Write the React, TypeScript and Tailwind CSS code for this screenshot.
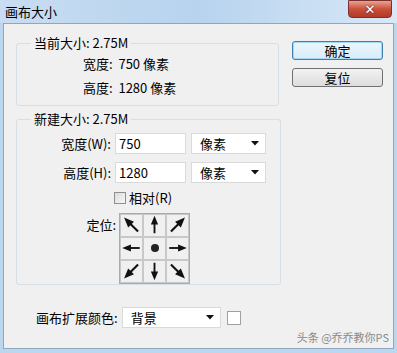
import React from "react";

const font = { fontFamily: '"Noto Sans CJK SC", "Microsoft YaHei", sans-serif' };

function Arrow({ angle }: { angle: number }) {
  const diag = angle % 90 !== 0;
  const s = diag ? 1.3 : 1.15;
  return (
    <svg width="22" height="22" viewBox="-11 -11 22 22">
      <g transform={`rotate(${angle}) scale(${s})`}>
        <line x1="0" y1="7.5" x2="0" y2="-2" stroke="#111" strokeWidth="1.7" />
        <polygon points="0,-8.5 -3.3,-0.5 3.3,-0.5" fill="#111" />
      </g>
    </svg>
  );
}

function Caret() {
  return (
    <svg width="8" height="5" viewBox="0 0 8 5">
      <polygon points="0,0 8,0 4,4.5" fill="#111" />
    </svg>
  );
}

function Select({ label, w }: { label: string; w: string }) {
  return (
    <div className={`flex items-center justify-between h-[21px] ${w} bg-white border border-[#dadada] pl-[8px] pr-[6px] text-[13px] text-black`}>
      <span>{label}</span>
      <Caret />
    </div>
  );
}

export default function App() {
  const cells: (number | null)[] = [-45, 0, 45, -90, null, 90, -135, 180, 135];
  return (
    <div style={font} className="w-[397px] h-[353px] bg-[#bcd6ee] flex flex-col overflow-hidden">
      <div className="h-[23px] shrink-0 flex items-start justify-between bg-gradient-to-r from-[#c8ddf2] via-[#b7d3ee] to-[#d8e8f7]">
        <div className="pl-[5px] pt-[2px] text-[13px] text-black">画布大小</div>
        <div className="mr-[5px] w-[44px] h-[18px] rounded-b-[4px] border border-[#7a3030] bg-gradient-to-b from-[#e7a38e] via-[#c9503a] to-[#b23a26] flex items-center justify-center">
          <span className="text-white font-bold text-[13px] leading-none" style={{ fontFamily: '"DejaVu Sans", sans-serif', textShadow: "0 0 2px #522" }}>✕</span>
        </div>
      </div>
      <div className="flex-1 mx-[3px] mb-[4px] bg-[#f0f0f0] border border-[#8ea6c0] relative text-[13px] text-black">
        <div className="flex pt-[12px] pl-[12px]">
          <div className="w-[263px] flex flex-col">
            <fieldset className="border border-[#d5dfe5] rounded-[3px] h-[70px] px-[14px]">
              <legend className="px-[3px] leading-[14px]">当前大小: 2.75M</legend>
              <div className="pl-[52px] pt-[6px] leading-[16px]">宽度:&nbsp; 750 像素</div>
              <div className="pl-[52px] pt-[8px] leading-[16px]">高度:&nbsp; 1280 像素</div>
            </fieldset>
            <fieldset className="mt-[6px] border border-[#d5dfe5] rounded-[3px] h-[173px] px-[14px]">
              <legend className="px-[3px] leading-[14px]">新建大小: 2.75M</legend>
              <div className="flex items-center mt-[7px]">
                <div className="w-[84px] text-right pr-[4px]">宽度(W):</div>
                <div className="w-[71px] h-[21px] bg-white border border-[#dadada] pl-[3px] leading-[19px]">750</div>
                <div className="ml-[5px]"><Select label="像素" w="w-[75px]" /></div>
              </div>
              <div className="flex items-center mt-[8px]">
                <div className="w-[84px] text-right pr-[4px]">高度(H):</div>
                <div className="w-[71px] h-[21px] bg-white border border-[#dadada] pl-[3px] leading-[19px]">1280</div>
                <div className="ml-[5px]"><Select label="像素" w="w-[75px]" /></div>
              </div>
              <div className="flex items-center mt-[5px] pl-[83px]">
                <div className="w-[12px] h-[12px] border border-[#8f8f8f] bg-gradient-to-br from-[#dcdcdc] to-[#f7f7f7]" />
                <span className="ml-[3px]">相对(R)</span>
              </div>
              <div className="flex mt-[5px]">
                <div className="w-[88px] text-right pr-[3px] pt-[2px]">定位:</div>
                <div className="grid grid-cols-3 border border-[#aaa] bg-[#f0f0f0]">
                  {cells.map((a, i) => (
                    <div key={i} className="w-[23px] h-[23px] border border-[#c8c8c8] flex items-center justify-center">
                      {a === null ? <div className="w-[8px] h-[8px] rounded-full bg-[#222]" /> : <Arrow angle={a} />}
                    </div>
                  ))}
                </div>
              </div>
            </fieldset>
          </div>
          <div className="ml-[13px] pt-[5px] flex flex-col gap-[8px]">
            <div className="w-[91px] h-[19px] rounded-[3px] border border-[#3c7fb1] bg-gradient-to-b from-[#eaf6fd] to-[#d9ecf8] shadow-[inset_0_0_0_1px_#a7d9f5] flex items-center justify-center">确定</div>
            <div className="w-[91px] h-[19px] rounded-[3px] border border-[#707070] bg-gradient-to-b from-[#f2f2f2] to-[#dddddd] flex items-center justify-center">复位</div>
          </div>
        </div>
        <div className="flex items-center mt-[22px] pl-[32px]">
          <span>画布扩展颜色:</span>
          <div className="ml-[4px]"><Select label="背景" w="w-[99px]" /></div>
          <div className="ml-[6px] w-[14px] h-[14px] bg-white border border-[#a0a0a0]" />
        </div>
        <div className="absolute right-[4px] bottom-[3px] text-[11px] text-[#8a8a8a]">头条 @乔乔教你PS</div>
      </div>
    </div>
  );
}
